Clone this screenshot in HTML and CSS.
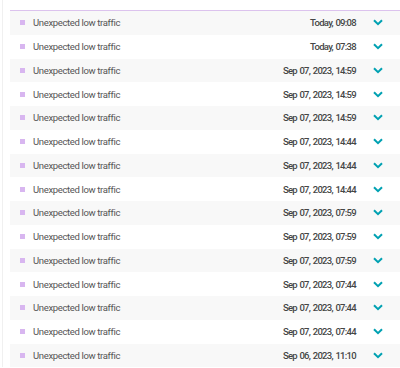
FILE: index.html
```html
<!DOCTYPE html>
<html lang="en">
<head>
    <meta charset="UTF-8">
    <meta name="viewport" content="width=device-width, initial-scale=1.0">
    <title>Problems</title>
    <link rel="stylesheet" href="styles.css">
</head>
<body>

    <div class="panel">
        <div class="event-list" id="eventList"></div>
    </div>

    <script>
        const events = [
            'Today, 09:08',
            'Today, 07:38',
            'Sep 07, 2023, 14:59',
            'Sep 07, 2023, 14:59',
            'Sep 07, 2023, 14:59',
            'Sep 07, 2023, 14:44',
            'Sep 07, 2023, 14:44',
            'Sep 07, 2023, 14:44',
            'Sep 07, 2023, 07:59',
            'Sep 07, 2023, 07:59',
            'Sep 07, 2023, 07:59',
            'Sep 07, 2023, 07:44',
            'Sep 07, 2023, 07:44',
            'Sep 07, 2023, 07:44',
            'Sep 06, 2023, 11:10'
        ];

        const list = document.getElementById('eventList');

        events.forEach(time => {
            const row = document.createElement('div');
            row.className = 'event-row';
            row.innerHTML =
                '<span class="marker"></span>' +
                '<span class="title">Unexpected low traffic</span>' +
                '<span class="time">' + time + '</span>' +
                '<button class="toggle" aria-label="Expand">' +
                '<svg width="10" height="7" viewBox="0 0 10 7"><path d="M1 1.2l4 4 4-4" fill="none" stroke="#00a1b2" stroke-width="2"/></svg>' +
                '</button>';
            list.appendChild(row);
        });
    </script>

</body>
</html>
```

FILE: styles.css
```css
body {
    margin: 0;
    background-color: #fff;
    font-family: Roboto, Arial, sans-serif;
    color: #454646;
}

.panel {
    border-left: 1px solid #f0f0f0;
    margin-left: 2px;
    padding: 10px 0 0 7px;
}

.event-list {
    border-top: 1px solid #dcc3ee;
}

.event-row {
    display: flex;
    align-items: center;
    height: 23.75px;
    padding-left: 10px;
}

.event-row:nth-child(odd) {
    background-color: #f8f8f8;
}

.marker {
    width: 5px;
    height: 5px;
    background-color: #d8b6f0;
    margin-right: 8px;
}

.title {
    flex: 1;
    font-size: 9.5px;
    letter-spacing: -0.35px;
    color: #555;
}

.time {
    font-size: 9.5px;
    font-weight: 500;
    letter-spacing: -0.7px;
    word-spacing: 0.8px;
}

.toggle {
    width: 44px;
    height: 100%;
    padding: 0;
    border: none;
    background: none;
    display: flex;
    align-items: center;
    justify-content: center;
    cursor: pointer;
}
```
